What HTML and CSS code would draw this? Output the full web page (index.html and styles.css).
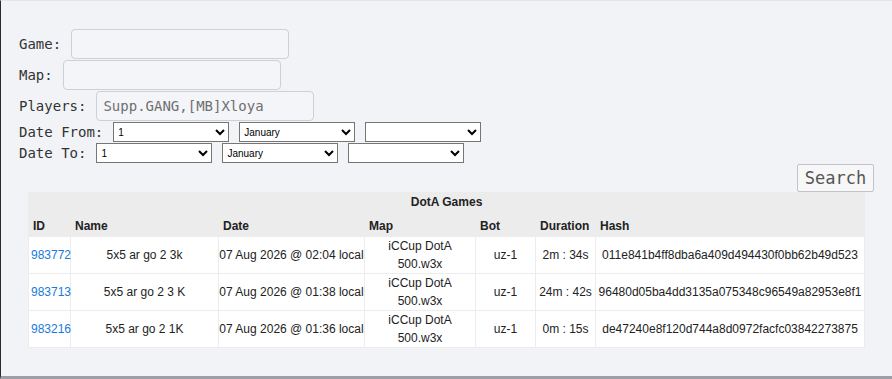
FILE: index.html
```html
<!DOCTYPE html>
<html lang="en">
<head>
    <meta charset="UTF-8">
    <meta name="viewport" content="width=device-width, initial-scale=1.0">
    <title>DotA Games</title>
    <link rel="stylesheet" href="styles.css">
</head>
<body>
    <div class="page">
        <form class="filters">
            <div class="field">
                <label for="game">Game:</label>
                <input type="text" id="game" name="game">
            </div>
            <div class="field">
                <label for="map">Map:</label>
                <input type="text" id="map" name="map">
            </div>
            <div class="field">
                <label for="players">Players:</label>
                <input type="text" id="players" name="players" value="Supp.GANG,[MB]Xloya">
            </div>
            <div class="field date-row">
                <label>Date From:</label>
                <select name="from-day"><option>1</option></select>
                <select name="from-month"><option>January</option></select>
                <select name="from-year"><option></option></select>
            </div>
            <div class="field date-row">
                <label>Date To:</label>
                <select name="to-day"><option>1</option></select>
                <select name="to-month"><option>January</option></select>
                <select name="to-year"><option></option></select>
            </div>
            <div class="actions">
                <button type="button">Search</button>
            </div>
        </form>

        <table class="games">
            <colgroup>
                <col style="width: 41px">
                <col style="width: 147px">
                <col style="width: 145px">
                <col style="width: 110px">
                <col style="width: 59px">
                <col style="width: 59px">
                <col style="width: 268px">
            </colgroup>
            <thead>
                <tr><th colspan="7" class="title">DotA Games</th></tr>
                <tr>
                    <th>ID</th>
                    <th>Name</th>
                    <th>Date</th>
                    <th>Map</th>
                    <th>Bot</th>
                    <th>Duration</th>
                    <th>Hash</th>
                </tr>
            </thead>
            <tbody>
                <tr>
                    <td><a href="#">983772</a></td>
                    <td>5x5 ar go 2 3k</td>
                    <td class="nowrap">07 Aug 2026 @ 02:04 local</td>
                    <td>iCCup DotA 500.w3x</td>
                    <td>uz-1</td>
                    <td class="nowrap">2m : 34s</td>
                    <td class="nowrap">011e841b4ff8dba6a409d494430f0bb62b49d523</td>
                </tr>
                <tr>
                    <td><a href="#">983713</a></td>
                    <td>5x5 ar go 2 3 K</td>
                    <td class="nowrap">07 Aug 2026 @ 01:38 local</td>
                    <td>iCCup DotA 500.w3x</td>
                    <td>uz-1</td>
                    <td class="nowrap">24m : 42s</td>
                    <td class="nowrap">96480d05ba4dd3135a075348c96549a82953e8f1</td>
                </tr>
                <tr>
                    <td><a href="#">983216</a></td>
                    <td>5x5 ar go 2 1K</td>
                    <td class="nowrap">07 Aug 2026 @ 01:36 local</td>
                    <td>iCCup DotA 500.w3x</td>
                    <td>uz-1</td>
                    <td class="nowrap">0m : 15s</td>
                    <td class="nowrap">de47240e8f120d744a8d0972facfc03842273875</td>
                </tr>
            </tbody>
        </table>
    </div>
</body>
</html>
```

FILE: styles.css
```css
html, body {
    margin: 0;
    padding: 0;
    height: 100%;
}
body {
    background: #f2f3f7;
    color: #333;
    font-family: "DejaVu Sans Mono", "Liberation Mono", monospace;
}
.page {
    box-sizing: border-box;
    height: 379px;
    border-left: 1px solid #2b2b2b;
    border-top: 1px solid #e3e4e9;
    border-bottom: 3px solid #9d9ea8;
    padding: 28px 18px 0 18px;
}
.filters {
    margin: 0;
}
.field {
    display: flex;
    align-items: center;
    gap: 10px;
    margin-bottom: 1px;
}
.field label {
    font-size: 14px;
    color: #333;
}
.field input {
    box-sizing: border-box;
    width: 218px;
    height: 30px;
    margin: 0;
    padding: 0 6px;
    border: 1px solid #cfd0d5;
    border-radius: 4px;
    background: #f4f5f8;
    font-family: "DejaVu Sans Mono", "Liberation Mono", monospace;
    font-size: 14px;
    color: #6f6f6f;
}
.date-row {
    gap: 10px;
    margin-top: 1px;
}
.date-row select {
    box-sizing: border-box;
    width: 116px;
    height: 20px;
    margin: 0;
    font-family: "Liberation Sans", Arial, sans-serif;
    font-size: 10px;
    color: #000;
    background: #fff;
}
.actions {
    display: flex;
    justify-content: flex-end;
    margin-top: 1px;
}
.actions button {
    box-sizing: border-box;
    width: 77px;
    height: 28px;
    padding: 0;
    border: 1px solid #c2c3c8;
    border-radius: 2px;
    background: #f7f7f8;
    font-family: "DejaVu Sans Mono", "Liberation Mono", monospace;
    font-size: 17px;
    color: #555;
    cursor: pointer;
}
.games {
    width: 837px;
    margin: 0 9px;
    table-layout: fixed;
    border-collapse: separate;
    border-spacing: 1px;
    background: #ececec;
    font-family: "Liberation Sans", Arial, sans-serif;
    font-size: 12px;
    color: #222;
}
.games th {
    box-sizing: border-box;
    height: 25px;
    padding: 4px 0 0 4px;
    text-align: left;
    font-weight: bold;
    background: #ececec;
}
.games th.title {
    height: 17px;
    padding: 0;
    text-align: center;
}
.games td {
    box-sizing: border-box;
    height: 36px;
    padding: 0 2px;
    background: #fff;
    text-align: center;
    line-height: 18px;
}
.games td.nowrap {
    white-space: nowrap;
    padding: 0;
}
.games a {
    color: #1a7ad9;
    text-decoration: none;
}
```
